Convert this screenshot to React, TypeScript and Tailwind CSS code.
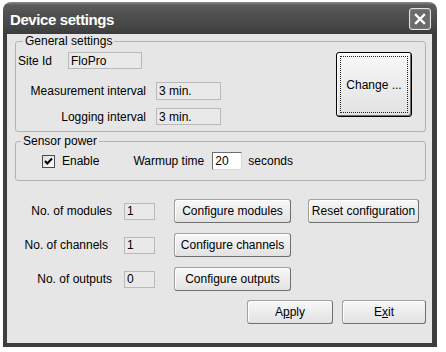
import React from "react";

const btn =
  "flex items-center justify-center h-[24px] rounded-[3px] border border-[#a0a0a0] border-r-[#6f6f6f] border-b-[#6f6f6f] bg-gradient-to-b from-[#f8f8f8] to-[#e2e2e2] shadow-[inset_1px_1px_0_#ffffff] text-[12px] text-black leading-none";

const roBox =
  "flex items-center border border-[#b9b9b9] bg-[#e9e9e9] px-[2px] text-[12px] text-black leading-none";

function Row({
  label,
  value,
  button,
  labelPad,
  extra,
}: {
  label: string;
  value: string;
  button: string;
  labelPad?: string;
  extra?: React.ReactNode;
}) {
  return (
    <div className="flex items-center h-[24px]">
      <div className={"w-[105px] text-right text-[12px] " + (labelPad ?? "")}>{label}</div>
      <div className={roBox + " ml-[12px] w-[31px] h-[17px]"}>{value}</div>
      <div className={btn + " ml-[19px] w-[117px]"}>{button}</div>
      {extra}
    </div>
  );
}

export default function App() {
  return (
    <div className="w-[446px] h-[352px] bg-white font-['Liberation_Sans',Arial,sans-serif] text-black overflow-hidden">
      <div className="ml-[3px] pt-[2px] w-[434px] h-[347px] flex flex-col">
        {/* Title bar */}
        <div className="h-[32px] shrink-0 rounded-t-[8px] flex items-center justify-between pl-[7px] pr-[6px] bg-[linear-gradient(to_bottom,#8c8c8c_0px,#5c5c5c_3px,#505050_12px,#474747_24px,#3b3b3b_32px)]">
          <span className="mt-[3px] text-white font-bold text-[15px] tracking-[-0.4px] leading-none">
            Device settings
          </span>
          <div className="mt-[2px] w-[22px] h-[22px] rounded-[3px] border border-[#e4e4e4] bg-[#6b6b6b] flex items-center justify-center shadow-[inset_0_0_2px_#9a9a9a]">
            <svg width="14" height="14" viewBox="0 0 14 14">
              <path d="M3 3 L11 11 M11 3 L3 11" stroke="#ffffff" strokeWidth="2.4" strokeLinecap="square" />
            </svg>
          </div>
        </div>
        {/* Body */}
        <div className="flex-1 flex flex-col border-l-[4px] border-r-[5px] border-b-[4px] border-[#3e3e3e] bg-[#e6e6e6]">
          {/* General settings */}
          <fieldset className="ml-[8px] w-[411px] h-[98px] border border-[#b3b3b3] rounded-[3px] flex">
            <legend className="ml-[7px] px-[2px] text-[12px] leading-[14px]">General settings</legend>
            <div className="flex justify-between items-start w-full">
              <div className="flex flex-col">
                <div className="mt-[4px] flex items-center h-[17px] pl-[2px]">
                  <span className="text-[12px]">Site Id</span>
                  <div className={roBox + " ml-[16px] w-[74px] h-[17px]"}>FloPro</div>
                </div>
                <div className="mt-[13px] flex items-center justify-end w-[205px] h-[18px] gap-[10px]">
                  <span className="text-[12px]">Measurement interval</span>
                  <div className={roBox + " w-[65px] h-[18px]"}>3 min.</div>
                </div>
                <div className="mt-[8px] flex items-center justify-end w-[205px] h-[17px] gap-[10px]">
                  <span className="text-[12px]">Logging interval</span>
                  <div className={roBox + " w-[65px] h-[17px]"}>3 min.</div>
                </div>
              </div>
              <div className="mt-[4px] mr-[13px] w-[76px] h-[65px] rounded-[3px] border border-black bg-gradient-to-b from-[#f8f8f8] to-[#e2e2e2] shadow-[inset_1px_1px_0_#ffffff,inset_-1px_-1px_0_#6f6f6f] p-[3px] flex">
                <div className="flex-1 border border-dotted border-[#222] flex items-center justify-center text-[12px]">
                  Change ...
                </div>
              </div>
            </div>
          </fieldset>
          {/* Sensor power */}
          <fieldset className="mt-[2px] ml-[8px] w-[411px] h-[47px] border border-[#b3b3b3] rounded-[3px]">
            <legend className="ml-[5px] px-[2px] text-[12px] leading-[14px]">Sensor power</legend>
            <div className="mt-[4px] flex items-center h-[18px]">
              <div className="ml-[26px] w-[13px] h-[13px] border border-[#4a4a4a] bg-gradient-to-br from-[#dcdcdc] to-white flex items-center justify-center">
                <svg width="11" height="11" viewBox="0 0 11 11">
                  <path d="M2 5 L4.3 7.5 L9 2.5" stroke="#000" strokeWidth="2" fill="none" />
                </svg>
              </div>
              <span className="ml-[7px] text-[12px]">Enable</span>
              <span className="ml-[34px] text-[12px]">Warmup time</span>
              <div className="ml-[8px] w-[30px] h-[18px] border border-t-[#6e6e6e] border-l-[#6e6e6e] border-r-[#d6d6d6] border-b-[#d6d6d6] bg-white flex items-center px-[2px] text-[12px] leading-none">
                20
              </div>
              <span className="ml-[6px] text-[12px]">seconds</span>
            </div>
          </fieldset>
          {/* Rows */}
          <div className="mt-[18px] flex flex-col gap-[10px]">
            <Row
              label="No. of modules"
              value="1"
              button="Configure modules"
              extra={<div className={btn + " ml-[17px] w-[111px]"}>Reset configuration</div>}
            />
            <Row label="No. of channels" value="1" button="Configure channels" labelPad="pr-[4px]" />
            <Row label="No. of outputs" value="0" button="Configure outputs" />
          </div>
          <div className="mt-[9px] flex">
            <div className={btn + " ml-[240px] w-[86px]"}>
              A<span className="underline">p</span>ply
            </div>
            <div className={btn + " ml-[9px] w-[84px]"}>
              E<span className="underline">x</span>it
            </div>
          </div>
        </div>
      </div>
    </div>
  );
}
